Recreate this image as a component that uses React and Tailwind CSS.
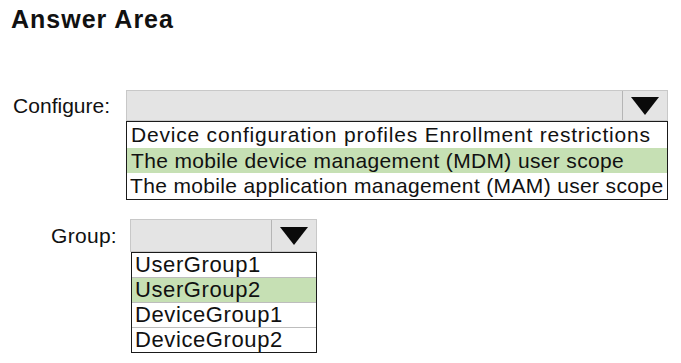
import React from "react";

function Arrow() {
  return (
    <svg width="28" height="18" viewBox="0 0 28 18" className="block">
      <polygon points="0,0 28,0 14,18" fill="#0a0a0a" />
    </svg>
  );
}

export default function App() {
  return (
    <div className="w-[681px] h-[363px] bg-white text-[#111] font-['Liberation_Sans',Arial,sans-serif] overflow-hidden">
      <h1 className="pl-[11px] pt-[5px] text-[25px] font-bold leading-[28px] tracking-[1px]">Answer Area</h1>

      <div className="flex mt-[57px]">
        <div className="w-[126px] pr-[16px] text-right text-[21px] leading-[31px]">Configure:</div>
        <div className="w-[542px]">
          <div className="h-[31px] flex bg-[#e4e4e4] border border-[#c8c8c8]">
            <div className="flex-1" />
            <div className="w-[45px] border-l border-[#b5b5b5] flex items-center justify-center pt-[1px]">
              <Arrow />
            </div>
          </div>
          <div className="border-[1.5px] border-[#1a1a1a] text-[21px] tracking-[0.35px] leading-[25.5px] bg-white">
            <div className="pl-[4px] whitespace-nowrap tracking-[0.8px]">Device configuration profiles Enrollment restrictions</div>
            <div className="pl-[4px] whitespace-nowrap bg-[#c6e0b4]">The mobile device management (MDM) user scope</div>
            <div className="pl-[3px] whitespace-nowrap">The mobile application management (MAM) user scope</div>
          </div>
        </div>
      </div>

      <div className="flex mt-[19px]">
        <div className="w-[130px] pr-[13px] text-right text-[21px] tracking-[0.3px] leading-[33px]">Group:</div>
        <div className="w-[187px]">
          <div className="h-[33px] flex bg-[#e4e4e4] border border-[#c8c8c8]">
            <div className="flex-1" />
            <div className="w-[45px] border-l border-[#b5b5b5] flex items-center justify-center pt-[1px]">
              <Arrow />
            </div>
          </div>
          <div className="ml-[1px] border-[1.5px] border-[#1a1a1a] text-[22px] tracking-[0.6px] leading-[24px] bg-white">
            <div className="pl-[3px] whitespace-nowrap border-b border-[#bdbdbd]">UserGroup1</div>
            <div className="pl-[3px] whitespace-nowrap border-b border-[#bdbdbd] bg-[#c6e0b4]">UserGroup2</div>
            <div className="pl-[3px] whitespace-nowrap border-b border-[#bdbdbd]">DeviceGroup1</div>
            <div className="pl-[3px] whitespace-nowrap">DeviceGroup2</div>
          </div>
        </div>
      </div>
    </div>
  );
}
